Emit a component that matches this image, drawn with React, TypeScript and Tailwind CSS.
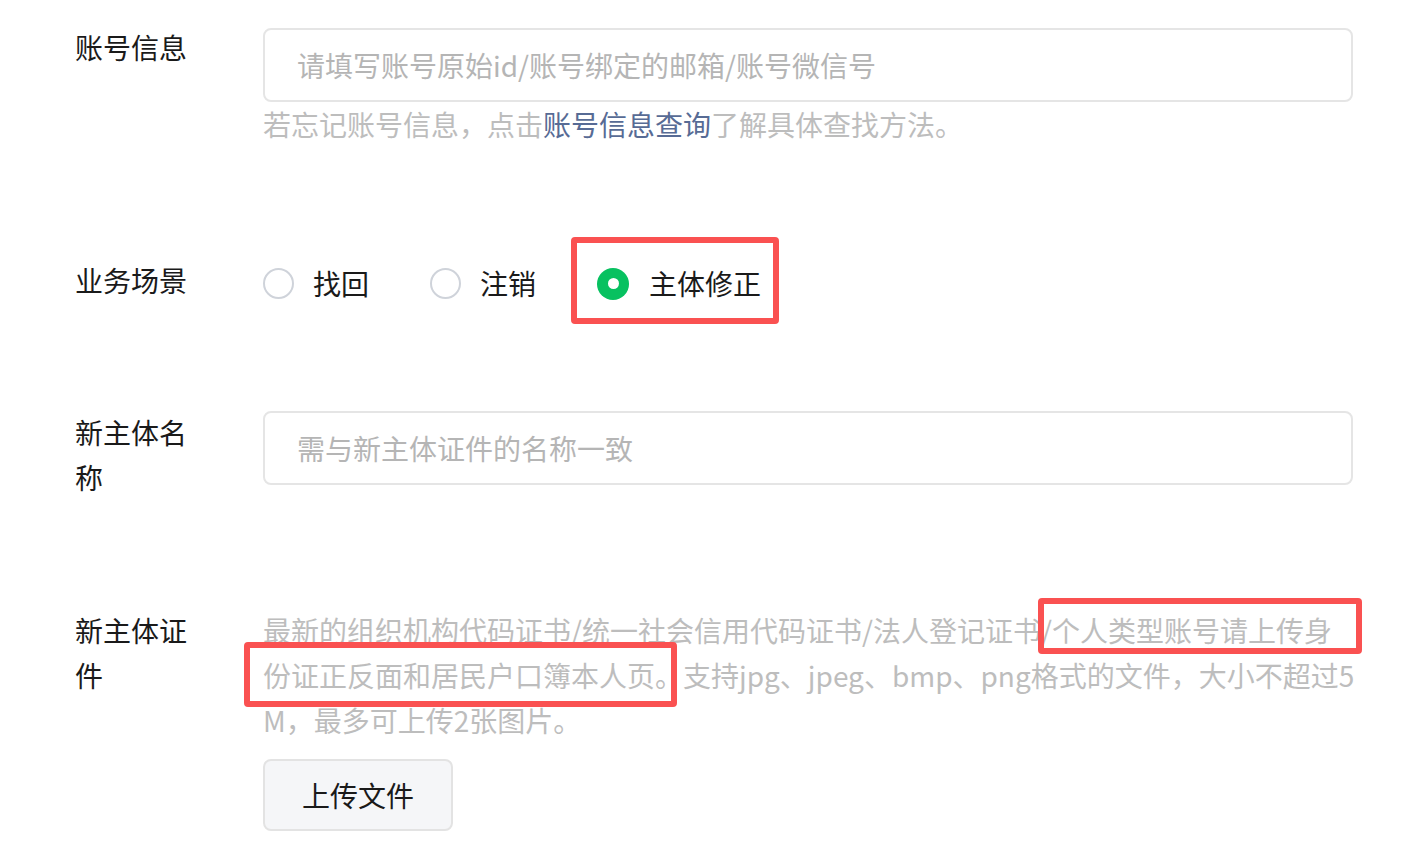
import React from "react";

// ====================================
// PIECES
// ====================================

const labelCls = "w-[120px] text-[28px] leading-[45px] text-[#1a1a1a]";

function Radio({ checked, text, marked }: { checked?: boolean; text: string; marked?: boolean }) {
  return (
    <label className="relative flex h-[45px] cursor-pointer items-center">
      {/* annotation box */}
      {marked && (
        <span className="pointer-events-none absolute left-[-26px] top-[-24px] h-[87px] w-[208px] rounded-[4px] border-[6px] border-[#fa5151]" />
      )}
      {checked ? (
        <span className="flex h-[32px] w-[32px] items-center justify-center rounded-full bg-[#07c160]">
          <span className="h-[11px] w-[11px] rounded-full bg-white" />
        </span>
      ) : (
        <span className="h-[31px] w-[31px] rounded-full border-2 border-[#cfd3da] bg-white" />
      )}
      <span className={`${checked ? "ml-[20px]" : "ml-[19px]"} text-[28px] leading-[45px] text-[#1a1a1a]`}>{text}</span>
    </label>
  );
}

// ====================================
// PAGE
// ====================================

export default function App() {
  return (
    <div className="min-h-[854px] w-full bg-white pl-[75px] pr-[73px] font-['Noto_Sans_CJK_SC','Liberation_Sans',sans-serif]">
      {/* ACCOUNT INFO */}
      <div className="flex pt-[25px]">
        <div className="w-[188px] shrink-0">
          <div className={labelCls}>账号信息</div>
        </div>
        <div className="min-w-0 flex-1">
          <input
            placeholder="请填写账号原始id/账号绑定的邮箱/账号微信号"
            className="mt-[3px] block h-[74px] w-full rounded-[8px] border-2 border-[#e5e5e5] bg-white px-[32px] text-[28px] text-[#1a1a1a] outline-none placeholder:text-[#b5b5b5]"
          />
          <p className="text-[28px] leading-[45px] text-[#bdbdbd]">
            若忘记账号信息，点击<span className="text-[#576b95]">账号信息查询</span>了解具体查找方法。
          </p>
        </div>
      </div>

      {/* SCENE */}
      <div className="mt-[111px] flex">
        <div className="w-[188px] shrink-0">
          <div className={labelCls}>业务场景</div>
        </div>
        <div className="flex flex-1 items-center gap-[62px] pt-[3px]">
          <Radio text="找回" />
          <div className="-ml-[1px]">
            <Radio text="注销" />
          </div>
          <div className="-ml-[1px]">
            <Radio text="主体修正" checked marked />
          </div>
        </div>
      </div>

      {/* NEW NAME */}
      <div className="mt-[104px] flex">
        <div className="w-[188px] shrink-0">
          <div className={labelCls}>新主体名称</div>
        </div>
        <div className="min-w-0 flex-1">
          <input
            placeholder="需与新主体证件的名称一致"
            className="mt-[1px] block h-[74px] w-full rounded-[8px] border-2 border-[#e5e5e5] bg-white px-[32px] text-[28px] text-[#1a1a1a] outline-none placeholder:text-[#b5b5b5]"
          />
        </div>
      </div>

      {/* NEW CERT */}
      <div className="mt-[108px] flex">
        <div className="w-[188px] shrink-0">
          <div className={labelCls}>新主体证件</div>
        </div>
        <div className="min-w-0 flex-1">
          <div className="relative text-[28px] leading-[45px] text-[#bdbdbd]">
            <div className="whitespace-nowrap">最新的组织机构代码证书/统一社会信用代码证书/法人登记证书/个人类型账号请上传身</div>
            <div className="whitespace-nowrap">份证正反面和居民户口簿本人页。支持jpg、jpeg、bmp、png格式的文件，大小不超过5</div>
            <div className="whitespace-nowrap">M，最多可上传2张图片。</div>
            {/* annotation boxes */}
            <span className="pointer-events-none absolute left-[775px] top-[-10px] h-[56px] w-[324px] rounded-[4px] border-[6px] border-[#fa5151]" />
            <span className="pointer-events-none absolute left-[-19px] top-[34px] h-[65px] w-[433px] rounded-[4px] border-[6px] border-[#fa5151]" />
          </div>
          <button className="mt-[16px] flex h-[72px] w-[190px] items-center justify-center rounded-[8px] border-2 border-[#e3e3e3] bg-[#f5f6f8] text-[28px] text-[#1a1a1a]">
            上传文件
          </button>
        </div>
      </div>
    </div>
  );
}
